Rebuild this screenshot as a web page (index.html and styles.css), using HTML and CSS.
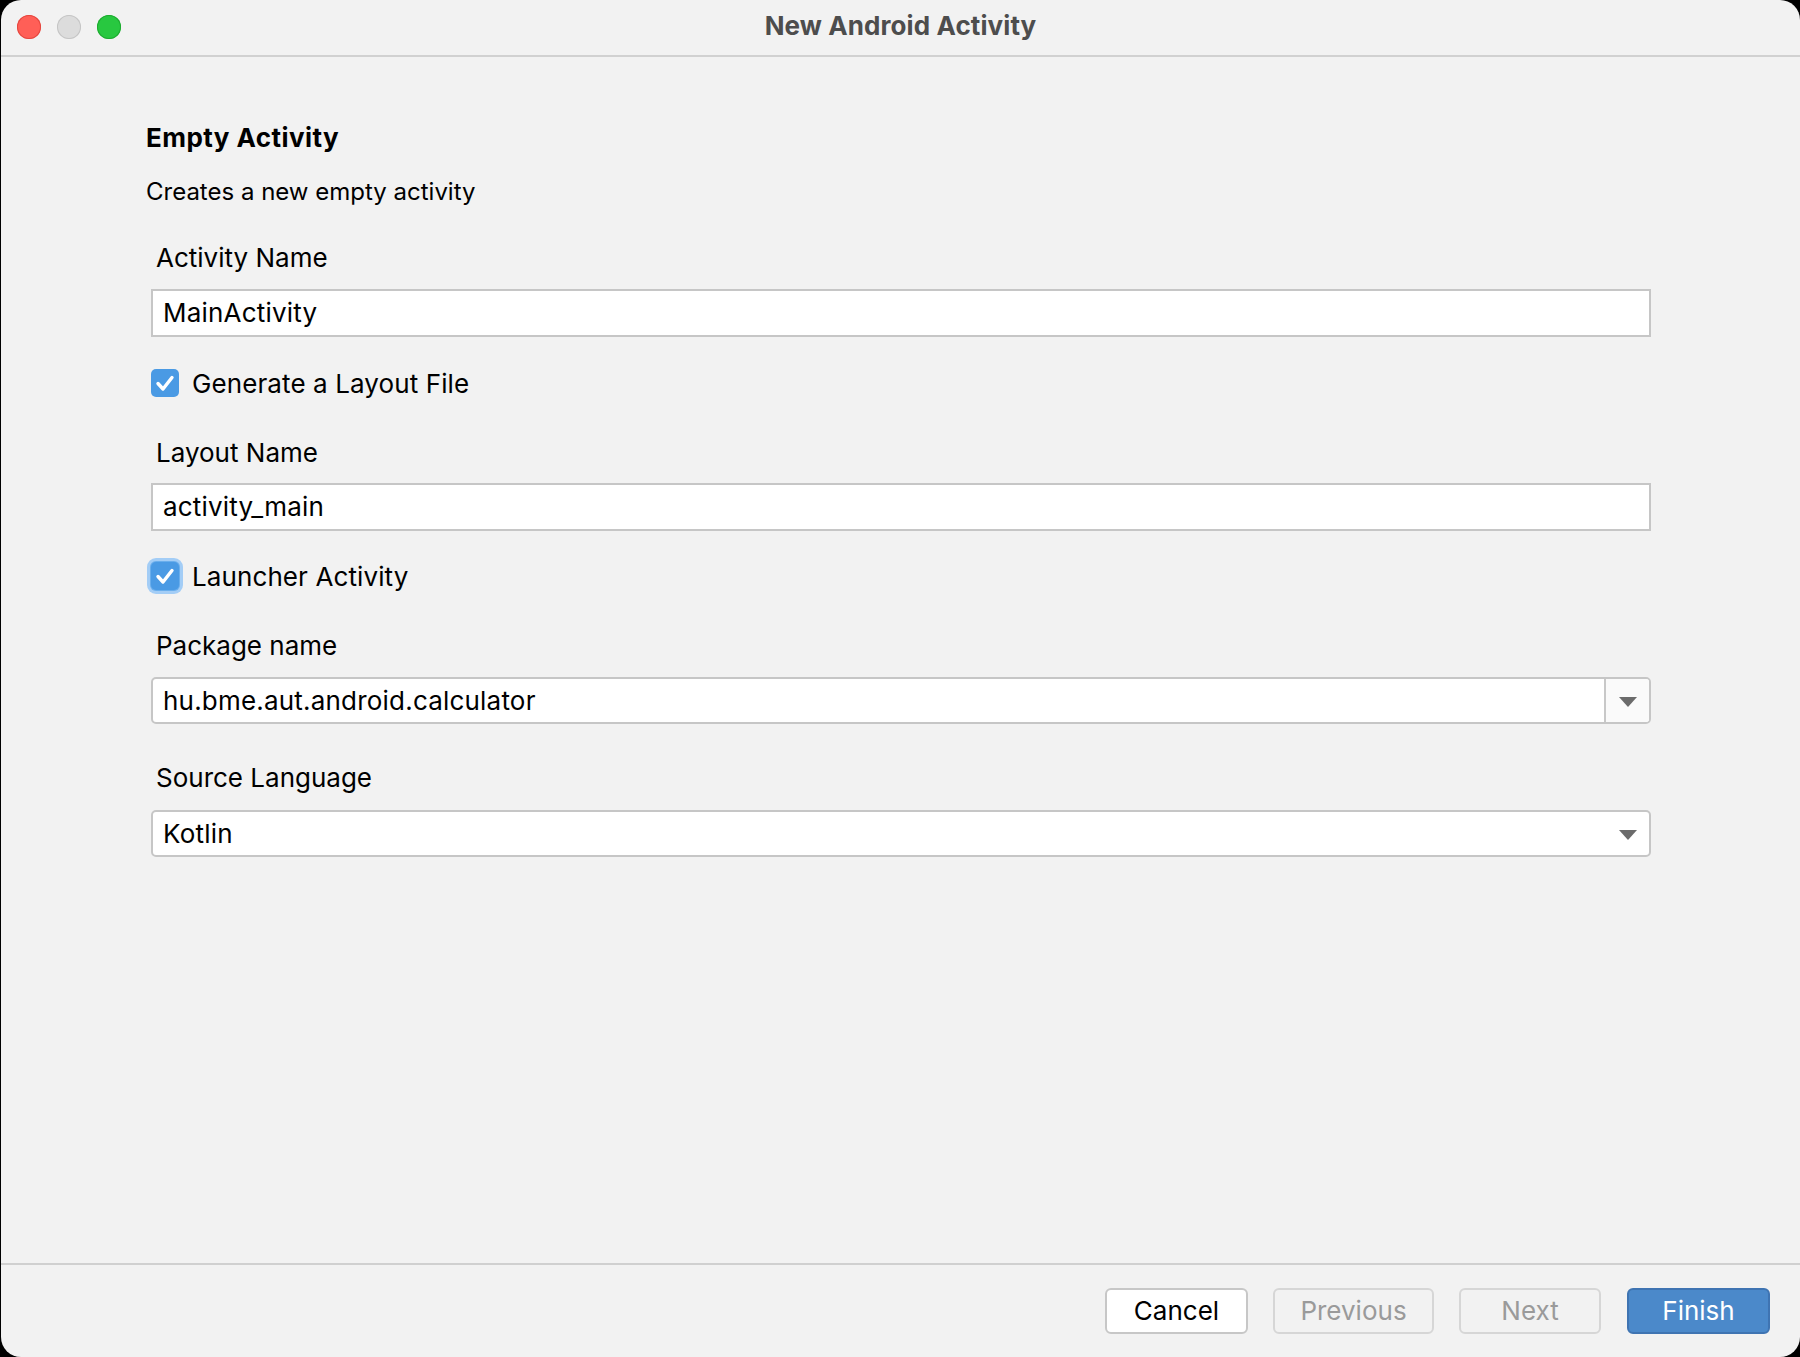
FILE: index.html
```html
<!DOCTYPE html>
<html lang="en">
<head>
<meta charset="utf-8">
<title>New Android Activity</title>
<link rel="stylesheet" href="styles.css">
</head>
<body>
<div class="window">
  <header class="titlebar">
    <div class="lights">
      <span class="light red"></span>
      <span class="light gray"></span>
      <span class="light green"></span>
    </div>
    <div class="title">New Android Activity</div>
    <div class="spacer"></div>
  </header>

  <main class="content">
    <div class="heading">Empty Activity</div>
    <div class="desc">Creates a new empty activity</div>

    <div class="form">
      <div class="label lbl-activity">Activity Name</div>
      <div class="input in-activity">MainActivity</div>

      <div class="check-row chk-layout">
        <span class="checkbox">
          <svg viewBox="0 0 28 28" width="28" height="28"><polyline points="7,14.5 12,20 21,8.5" fill="none" stroke="#fff" stroke-width="3.4" stroke-linecap="round" stroke-linejoin="round"/></svg>
        </span>
        <span class="check-label">Generate a Layout File</span>
      </div>

      <div class="label lbl-layout">Layout Name</div>
      <div class="input in-layout">activity_main</div>

      <div class="check-row chk-launcher">
        <span class="checkbox focused">
          <svg viewBox="0 0 28 28" width="28" height="28"><polyline points="7,14.5 12,20 21,8.5" fill="none" stroke="#fff" stroke-width="3.4" stroke-linecap="round" stroke-linejoin="round"/></svg>
        </span>
        <span class="check-label">Launcher Activity</span>
      </div>

      <div class="label lbl-package">Package name</div>
      <div class="combo editable in-package">
        <span class="combo-text">hu.bme.aut.android.calculator</span>
        <span class="combo-btn">
          <svg viewBox="0 0 18 10" width="18" height="10"><polygon points="0,0 18,0 9,10" fill="#6b6b6b"/></svg>
        </span>
      </div>

      <div class="label lbl-source">Source Language</div>
      <div class="combo in-source">
        <span class="combo-text">Kotlin</span>
        <span class="combo-btn">
          <svg viewBox="0 0 18 10" width="18" height="10"><polygon points="0,0 18,0 9,10" fill="#6b6b6b"/></svg>
        </span>
      </div>
    </div>
  </main>

  <footer class="footer">
    <button class="btn btn-cancel">Cancel</button>
    <button class="btn btn-prev" disabled>Previous</button>
    <button class="btn btn-next" disabled>Next</button>
    <button class="btn btn-finish">Finish</button>
  </footer>
</div>
</body>
</html>
```

FILE: styles.css
```css
* {
  box-sizing: border-box;
  margin: 0;
  padding: 0;
}

html, body {
  width: 1800px;
  height: 1357px;
  background: #000;
  overflow: hidden;
}

body {
  font-family: Inter, "Liberation Sans", Arial, sans-serif;
  color: #000;
}

.window {
  margin-left: 1px;
  width: 1799px;
  height: 1357px;
  background: #f2f2f2;
  border-radius: 20px;
  overflow: hidden;
  display: flex;
  flex-direction: column;
}

/* Title bar */
.titlebar {
  flex: none;
  height: 57px;
  border-bottom: 2px solid #d1d1d1;
  display: grid;
  grid-template-columns: 1fr auto 1fr;
}

.lights {
  display: flex;
  gap: 16px;
  padding: 15px 0 0 16px;
}

.light {
  width: 24px;
  height: 24px;
  border-radius: 50%;
}

.red { background: #ff5f57; box-shadow: inset 0 0 0 1px #e4473f; }
.gray { background: #dcdcdc; box-shadow: inset 0 0 0 1px #c5c5c5; }
.green { background: #28c840; box-shadow: inset 0 0 0 1px #1daa2f; }

.title {
  font-size: 26px;
  font-weight: 700;
  line-height: 51px;
  color: #4d4d4d;
  letter-spacing: 0.1px;
}

/* Content */
.content {
  flex: 1;
  padding: 65px 0 0 145px;
}

.heading {
  font-size: 26px;
  font-weight: 700;
  line-height: 32px;
  letter-spacing: 0.45px;
}

.desc {
  margin-top: 23px;
  font-size: 24px;
  line-height: 30px;
}

.form {
  margin-left: 5px;
  width: 1500px;
}

.label {
  padding-left: 5px;
  font-size: 26px;
  line-height: 32px;
}

.lbl-activity { margin-top: 35px; }
.lbl-layout { margin-top: 40px; }
.lbl-package { margin-top: 40px; }
.lbl-source { margin-top: 38px; }

.input {
  height: 48px;
  border: 2px solid #c6c6c6;
  background: #fff;
  padding-left: 10px;
  font-size: 26px;
  line-height: 44px;
  letter-spacing: 0.2px;
}

.in-activity { margin-top: 15px; }
.in-layout { margin-top: 14px; }
.in-package { margin-top: 15px; }
.in-source { margin-top: 16px; }

.check-row {
  display: flex;
  align-items: flex-start;
  gap: 13px;
  height: 28px;
}

.chk-layout { margin-top: 32px; }
.chk-launcher { margin-top: 31px; }

.checkbox {
  flex: none;
  width: 28px;
  height: 28px;
  border-radius: 5px;
  background: #4a9ae4;
  display: block;
}

.checkbox svg { display: block; }

.checkbox.focused {
  box-shadow: 0 0 0 1px #6aaeec, 0 0 0 4px #a3cdf6;
}

.check-label {
  font-size: 26px;
  line-height: 30px;
  letter-spacing: 0.1px;
}

/* Combo boxes */
.combo {
  display: flex;
  height: 47px;
  border: 2px solid #c6c6c6;
  border-radius: 5px;
  background: #fff;
  overflow: hidden;
}

.combo-text {
  flex: 1;
  padding-left: 10px;
  font-size: 26px;
  line-height: 43px;
  letter-spacing: 0.2px;
}

.combo-btn {
  flex: none;
  width: 45px;
  display: flex;
  align-items: center;
  justify-content: center;
  padding-top: 2px;
  border-left: 2px solid transparent;
}

.combo.editable .combo-btn {
  border-left-color: #c8c8c8;
  background: #fafafa;
}

/* Footer */
.footer {
  flex: none;
  height: 94px;
  border-top: 2px solid #d0d0d0;
  display: flex;
  justify-content: flex-end;
  align-items: flex-start;
  gap: 25px;
  padding: 23px 30px 0 0;
}

.btn {
  height: 46px;
  border: 2px solid #c7c7c7;
  border-radius: 6px;
  background: #fff;
  font-family: Inter, "Liberation Sans", Arial, sans-serif;
  font-size: 26px;
  line-height: 42px;
  color: #000;
  text-align: center;
}

.btn-cancel { width: 143px; }
.btn-prev { width: 161px; }
.btn-next { width: 142px; }
.btn-finish { width: 143px; margin-left: 1px; }

.btn-prev, .btn-next {
  background: transparent;
  border-color: #d6d6d6;
  color: #9a9a9a;
}

.btn-finish {
  background: #4b89ca;
  border-color: #3f74b2;
  color: #fff;
}
```
